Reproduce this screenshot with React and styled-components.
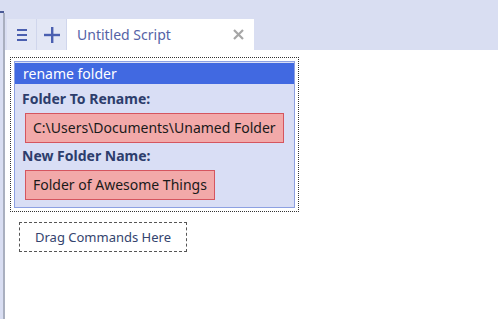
import React from "react";
import styled, { createGlobalStyle } from "styled-components";

const Global = createGlobalStyle`
  html, body { margin: 0; padding: 0; }
  body { width: 498px; height: 319px; overflow: hidden; background: #ffffff; font-family: "Noto Sans", "Open Sans", sans-serif; }
`;

const Page = styled.div`
  width: 498px;
  height: 319px;
  display: flex;
  background: #d9def2;
`;

const SideRail = styled.div`
  width: 3px;
  display: flex;
  flex-direction: column;
  padding-top: 11px;
`;

const RailMark = styled.div`
  width: 4px;
  height: 2px;
  background: #4a5a96;
`;

const RailLine = styled.div`
  width: 2px;
  height: 100%;
  background: #a9afbf;
  margin-left: 3px;
`;

const Main = styled.div`
  flex: 1;
  display: flex;
  flex-direction: column;
  padding-left: 2px;
`;

const TabBar = styled.div`
  height: 50px;
  display: flex;
  align-items: flex-end;
  padding-left: 2px;
  background: #d9def2;
`;

const ToolButton = styled.div`
  width: 30px;
  height: 31px;
  box-sizing: border-box;
  display: flex;
  align-items: center;
  justify-content: center;
  background: #e3e7f5;
  border-right: 1px solid #d0d6ec;
  color: #4a5fb0;
`;

const Tab = styled.div`
  width: 187px;
  height: 31px;
  background: #ffffff;
  display: flex;
  align-items: center;
  justify-content: space-between;
  padding: 0 10px 0 10px;
  box-sizing: border-box;
  font-size: 14px;
  color: #5563a6;
`;

const Close = styled.span`
  color: #a6a6a6;
  display: flex;
`;

const Content = styled.div`
  flex: 1;
  background: #ffffff;
  padding: 7px 0 0 5px;
  display: flex;
  flex-direction: column;
  align-items: flex-start;
`;

const Selection = styled.div`
  width: 289px;
  border: 1px dotted #333;
  padding: 3px;
  box-sizing: border-box;
`;

const Command = styled.div`
  border: 1px solid #8da0e2;
  background: #d9def5;
  padding-bottom: 7px;
`;

const Header = styled.div`
  background: #4169e1;
  color: #ffffff;
  font-size: 14px;
  height: 21px;
  line-height: 21px;
  padding-left: 8px;
  margin: 1px 0 0 0;
`;

const Label = styled.div`
  font-weight: bold;
  font-size: 14px;
  color: #2d3d6c;
  padding: ${(p) => p.$top}px 0 0 7px;
  line-height: 18px;
`;

const Field = styled.div`
  display: inline-block;
  margin: 5px 0 0 10px;
  height: 30px;
  line-height: 28px;
  box-sizing: border-box;
  padding: 0 7px;
  background: #f2a9a9;
  border: 1px solid #d5555f;
  color: #1a1a1a;
  font-size: 14px;
  white-space: nowrap;
`;

const DropZone = styled.div`
  margin: 10px 0 0 9px;
  width: 168px;
  height: 30px;
  box-sizing: border-box;
  border: 1px dashed #555;
  display: flex;
  align-items: center;
  justify-content: center;
  font-size: 13px;
  color: #34446e;
`;

export default function App() {
  return (
    <>
      <Global />
      <Page>
        <SideRail>
          <RailMark />
          <RailLine />
        </SideRail>
        <Main>
          <TabBar>
            <ToolButton>
              <svg width="12" height="14" viewBox="0 0 12 14">
                <rect x="1" y="1" width="10" height="2" fill="currentColor" />
                <rect x="1" y="6" width="10" height="2" fill="currentColor" />
                <rect x="1" y="11" width="10" height="2" fill="currentColor" />
              </svg>
            </ToolButton>
            <ToolButton>
              <svg width="18" height="18" viewBox="0 0 18 18">
                <rect x="8" y="1" width="2.4" height="16" fill="currentColor" />
                <rect x="1" y="7.8" width="16" height="2.4" fill="currentColor" />
              </svg>
            </ToolButton>
            <Tab>
              <span>Untitled Script</span>
              <Close>
                <svg width="11" height="11" viewBox="0 0 11 11">
                  <path d="M1 1 L10 10 M10 1 L1 10" stroke="currentColor" strokeWidth="2.2" />
                </svg>
              </Close>
            </Tab>
          </TabBar>
          <Content>
            <Selection>
              <Command>
                <Header>rename folder</Header>
                <Label $top={6}>Folder To Rename:</Label>
                <Field>C:\Users\Documents\Unamed Folder</Field>
                <Label $top={4}>New Folder Name:</Label>
                <Field>Folder of Awesome Things</Field>
              </Command>
            </Selection>
            <DropZone>Drag Commands Here</DropZone>
          </Content>
        </Main>
      </Page>
    </>
  );
}
